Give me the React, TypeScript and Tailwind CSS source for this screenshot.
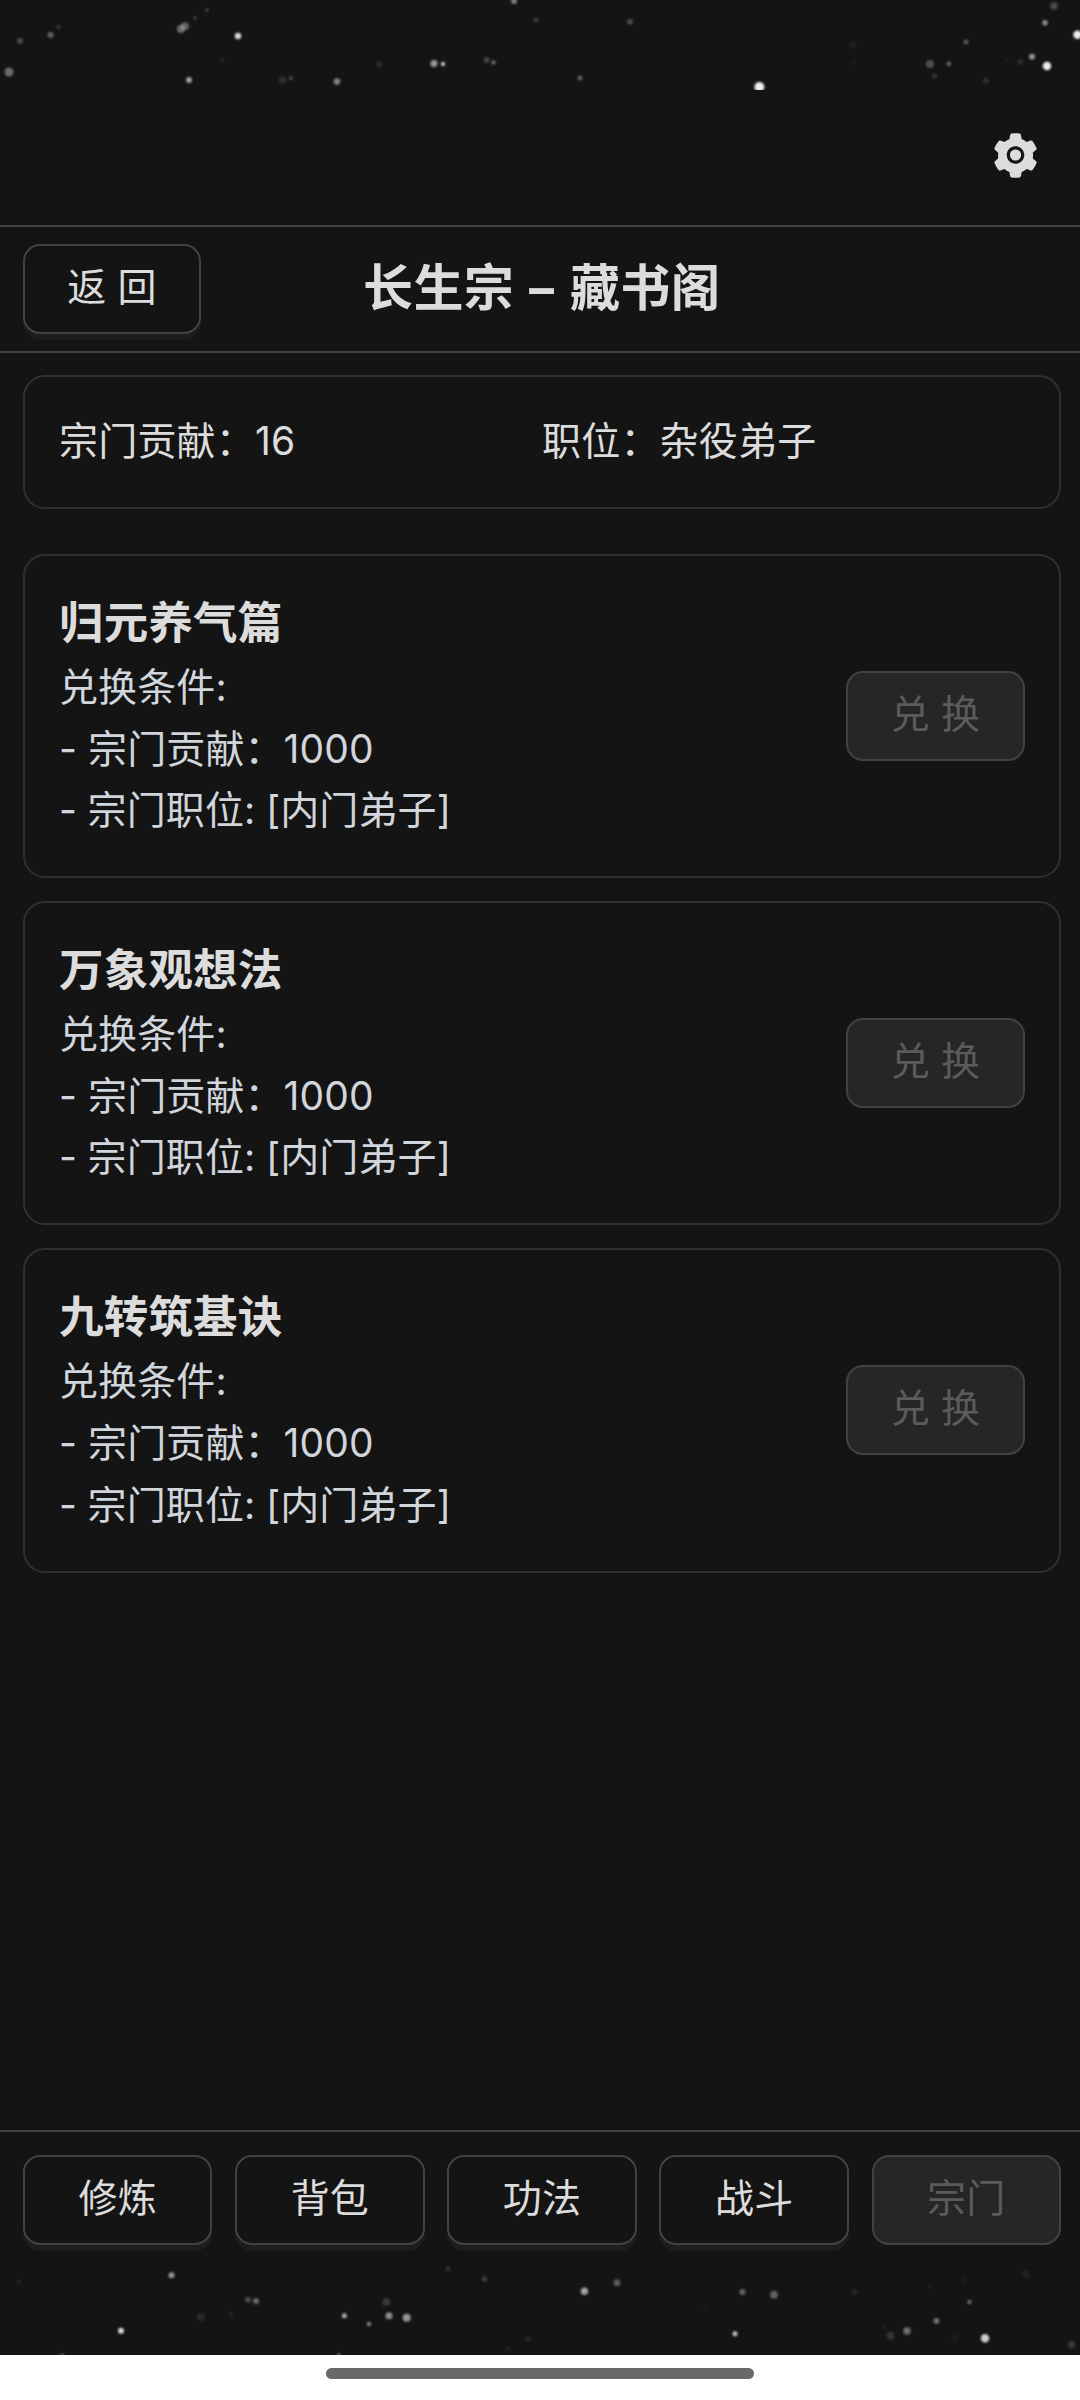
import React, { useState } from 'react';
import { AiFillSetting } from 'react-icons/ai';

interface Skill {
  id: string;
  name: string;
  cost: number;
  rank: string;
}

interface StarFieldProps {
  stars: number[][];
  height: number;
}

interface GameButtonProps {
  children: React.ReactNode;
  className?: string;
  disabled?: boolean;
  onClick?: () => void;
}

const skills: Skill[] = [
  { id: 'guiyuan', name: '归元养气篇', cost: 1000, rank: '内门弟子' },
  { id: 'wanxiang', name: '万象观想法', cost: 1000, rank: '内门弟子' },
  { id: 'jiuzhuan', name: '九转筑基诀', cost: 1000, rank: '内门弟子' },
];

const tabs = ['修炼', '背包', '功法', '战斗', '宗门'];

// [x, y, 半径, 透明度]
const topStars = [
  [9, 72, 4.5, 0.4], [20, 41, 3, 0.25], [50.6, 35, 3, 0.35], [58.5, 27, 2.5, 0.12],
  [181, 29, 4, 0.4], [185, 26, 4, 0.35], [195, 18, 2, 0.2], [207, 10, 2, 0.2], [238, 36, 3.2, 0.9],
  [222.5, 60, 2, 0.1], [189, 80, 3, 0.65], [282.7, 80, 4, 0.12], [291, 78, 2, 0.28],
  [337, 81.6, 3.3, 0.5], [379.5, 64.5, 3, 0.12], [434, 63.5, 3.5, 0.6], [443, 64, 2.2, 0.8],
  [486.6, 60, 3, 0.22], [493.5, 62.5, 2.2, 0.4], [514, 1, 3, 0.5], [536, 20, 2.5, 0.18],
  [580, 78, 2.5, 0.35], [630, 21.7, 3, 0.25], [759.4, 87, 5, 1], [853, 44.7, 3.5, 0.05],
  [853.7, 62, 3, 0.03], [930, 64, 4, 0.27], [934.6, 76, 2.7, 0.13], [948.8, 63.7, 2.3, 0.4],
  [966, 42, 2.5, 0.33], [986, 80.7, 3, 0.13], [1007.6, 60, 2, 0.05], [1020.4, 62, 2.7, 0.13],
  [1032, 56.7, 3, 0.6], [1047, 66, 4.2, 1], [1045, 22.7, 2.8, 0.55], [1054, 6, 3.7, 0.25],
  [1077.5, 34.7, 4.2, 1],
];

const bottomStars = [
  [171.5, 13.3, 3, 0.6], [19, 20, 2.5, 0.06], [121, 68.7, 3, 0.9], [201, 55, 4, 0.1],
  [248, 37.7, 3, 0.25], [256, 39, 3, 0.4], [231, 52, 2, 0.1], [344.4, 53.7, 2.5, 0.7],
  [369, 62, 2.3, 0.5], [386.4, 40, 4, 0.17], [389, 53.7, 3.5, 0.55], [406.7, 55.7, 4, 0.6],
  [448, 6.7, 2, 0.2], [484.5, 17, 2.5, 0.22], [528, 76.7, 2.5, 0.1], [508, 86.7, 2, 0.08],
  [339, 92.7, 2, 0.3], [62, 93, 2.5, 0.2], [584.4, 29.3, 3.7, 0.65], [617, 20.7, 3.5, 0.32],
  [742.5, 30, 3, 0.37], [774, 32.7, 4, 0.35], [735, 71.7, 2.5, 0.8], [705, 45, 2, 0.05],
  [854.7, 30.3, 2.7, 0.1], [930, 25, 3, 0.03], [963.5, 18, 3, 0.04], [1025.5, 12, 4, 0.06],
  [969.4, 40, 2.2, 0.4], [936.4, 59, 3, 0.42], [907, 69, 3.7, 0.42], [890.5, 73.7, 4, 0.15],
  [884, 65, 2.5, 0.05], [955, 76, 3.5, 0.05], [985, 76.3, 4.2, 0.85], [1071.7, 82.7, 3.7, 0.17],
];

// 星空背景
const StarField: React.FC<StarFieldProps> = ({ stars, height }) => (
  <svg className="block shrink-0" width="1080" height={height} viewBox={`0 0 1080 ${height}`}>
    <g className="blur-[1.2px]">
      {stars.map(([x, y, r, opacity]) => (
        <circle key={`${x}-${y}`} cx={x} cy={y} r={r} fill="#eee" opacity={opacity} />
      ))}
    </g>
  </svg>
);

const GameButton: React.FC<GameButtonProps> = ({ children, className = '', disabled = false, onClick }) => (
  <button
    onClick={onClick}
    disabled={disabled}
    className={`h-[90px] rounded-[17px] border-2 border-[#424242] pb-[4px] text-center ${
      disabled ? 'bg-[#262626] text-[#5b5b5b]' : 'bg-[#141414] text-[#dcdcdc] shadow-[0_6px_0_#1d1d1d]'
    } ${className}`}
  >
    {children}
  </button>
);

const App: React.FC = () => {
  const [activeTab, setActiveTab] = useState<string>('宗门');

  return (
    <div className="flex h-[2400px] w-[1080px] flex-col overflow-hidden bg-[#141414] font-['Inter','Noto_Sans_CJK_SC',sans-serif] text-[39px] leading-[61.875px] tracking-[0.2px] text-[#dcdcdc]">
      <StarField stars={topStars} height={90} />

      {/* 设置 */}
      <div className="flex h-[137px] items-center justify-end border-b-2 border-[#424242] pr-[39px] pb-[5px]">
        <AiFillSetting className="size-[51px]" />
      </div>

      {/* 标题栏 */}
      <header className="grid h-[126px] grid-cols-[178px_1fr_178px] items-center border-b-2 border-[#424242] pr-[19px] pl-[23px]">
        <GameButton>返 回</GameButton>
        <h1 className="pb-px text-center text-[50px] font-bold tracking-[0.3px]">
          长生宗 <span className="inline-block scale-x-150 px-[4px]">-</span> 藏书阁
        </h1>
      </header>

      <main className="flex-1 pt-[22px] pr-[19px] pl-[23px]">
        <div className="grid h-[134px] grid-cols-2 items-center rounded-[22px] border-2 border-[#303030] px-[34px] pb-[2px]">
          <div>宗门贡献：16</div>
          <div>职位：杂役弟子</div>
        </div>

        {/* 功法列表 */}
        <div className="mt-[45px] flex flex-col gap-[22.7px]">
          {skills.map((skill) => (
            <section
              key={skill.id}
              className="flex h-[324.4px] items-center justify-between rounded-[22px] border-2 border-[#303030] px-[34px]"
            >
              <div className="pb-[3px]">
                <h2 className="pt-[4px] text-[44.5px] leading-[63.5px] font-bold">{skill.name}</h2>
                <div className="tracking-[0.1px] text-gray-300">
                  <p>兑换条件:</p>
                  <p>- 宗门贡献：{skill.cost}</p>
                  <p className="[word-spacing:-0.5px]">- 宗门职位: [{skill.rank}]</p>
                </div>
              </div>
              <GameButton disabled className="w-[179px]">
                兑 换
              </GameButton>
            </section>
          ))}
        </div>
      </main>

      {/* 底部导航栏 */}
      <nav className="grid h-[132px] grid-cols-5 gap-[22.8px] border-t-2 border-[#424242] pt-[23px] pr-[19px] pl-[23px]">
        {tabs.map((tab) => (
          <GameButton key={tab} disabled={tab === activeTab} onClick={() => setActiveTab(tab)}>
            {tab}
          </GameButton>
        ))}
      </nav>
      <StarField stars={bottomStars} height={93} />

      <div className="flex h-[45px] shrink-0 justify-center bg-white pt-[13px]">
        <div className="h-[11px] w-[428px] rounded-full bg-[#686868]"></div>
      </div>
    </div>
  );
};

export default App;
